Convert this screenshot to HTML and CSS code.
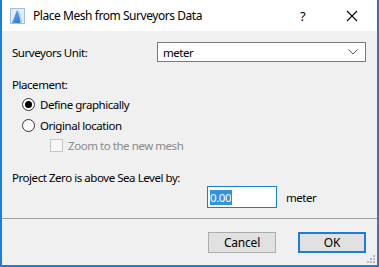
FILE: index.html
```html
<!DOCTYPE html>
<html lang="en">
<head>
  <meta charset="UTF-8" />
  <title>Place Mesh from Surveyors Data</title>
  <link rel="stylesheet" href="styles.css">
</head>
<body>
  <div class="dialog">
    <div class="titlebar">
      <svg class="app-icon" width="15" height="16" viewBox="0 0 15 16">
        <defs>
          <linearGradient id="ig" x1="0" y1="0" x2="1" y2="1">
            <stop offset="0" stop-color="#6fb0f0"/>
            <stop offset="1" stop-color="#1f6fd6"/>
          </linearGradient>
        </defs>
        <rect x="0.5" y="0.5" width="14" height="15" fill="#e4eefa" stroke="#9fbfe6"/>
        <path d="M2 15 L7 2 Q10 2 12 15 Z" fill="url(#ig)"/>
        <path d="M7 2 Q10 2 12 15 L10.5 15 Q9 5 7 2 Z" fill="#ffffff" opacity="0.7"/>
      </svg>
      <span class="title">Place Mesh from Surveyors Data</span>
      <span class="help">?</span>
      <svg class="close" width="12" height="12" viewBox="0 0 12 12">
        <path d="M1 1 L11 11 M11 1 L1 11" stroke="#000" stroke-width="1.1"/>
      </svg>
    </div>

    <div class="content">
      <div class="unit-row">
        <span class="label">Surveyors Unit:</span>
        <div class="select">
          <span>meter</span>
          <svg width="10" height="6" viewBox="0 0 10 6">
            <path d="M0.5 0.5 L5 5 L9.5 0.5" fill="none" stroke="#555" stroke-width="1"/>
          </svg>
        </div>
      </div>

      <div class="group-label">Placement:</div>
      <div class="option">
        <span class="radio checked"></span>
        <span>Define graphically</span>
      </div>
      <div class="option">
        <span class="radio"></span>
        <span>Original location</span>
      </div>
      <div class="option sub disabled">
        <span class="check"></span>
        <span>Zoom to the new mesh</span>
      </div>

      <div class="level-label">Project Zero is above Sea Level by:</div>
      <div class="level-row">
        <div class="field"><span class="sel">0.00</span><span class="caret"></span></div>
        <span>meter</span>
      </div>
    </div>

    <div class="separator"></div>

    <div class="buttons">
      <button class="btn">Cancel</button>
      <button class="btn default">OK</button>
    </div>

    <svg class="grip" width="10" height="10" viewBox="0 0 10 10">
      <rect x="7" y="1" width="2" height="2" fill="#b8b8b8"/>
      <rect x="4" y="4" width="2" height="2" fill="#b8b8b8"/>
      <rect x="7" y="4" width="2" height="2" fill="#b8b8b8"/>
      <rect x="1" y="7" width="2" height="2" fill="#b8b8b8"/>
      <rect x="4" y="7" width="2" height="2" fill="#b8b8b8"/>
      <rect x="7" y="7" width="2" height="2" fill="#b8b8b8"/>
    </svg>
  </div>
</body>
</html>
```

FILE: styles.css
```css
:root {
  --blue: #1a7fd4;
  --face: #f0f0f0;
  --text: #000000;
  --muted: #8a8a8a;
}

* {
  box-sizing: border-box;
}

body {
  margin: 0;
  width: 379px;
  height: 267px;
  overflow: hidden;
  font-family: "Noto Sans", "Open Sans", sans-serif;
  font-size: 11.5px;
  letter-spacing: -0.45px;
  color: var(--text);
}

.dialog {
  position: relative;
  width: 379px;
  height: 267px;
  background: var(--face);
  border: 2px solid var(--blue);
  border-top: 0;
}

.titlebar {
  display: flex;
  align-items: center;
  height: 31px;
  background: #ffffff;
  padding: 0 0 0 8px;
}

.app-icon {
  margin-right: 8px;
}

.title {
  flex: 1;
  font-size: 12px;
  letter-spacing: -0.45px;
}

.help {
  font-size: 13px;
  width: 20px;
  margin-right: 26px;
}

.close {
  margin-right: 19px;
}

.content {
  padding: 11px 11px 0 10px;
}

.unit-row {
  display: flex;
  align-items: center;
  height: 20px;
}

.unit-row .label {
  width: 145px;
}

.select {
  flex: 1;
  display: flex;
  align-items: center;
  justify-content: space-between;
  height: 20px;
  background: #ffffff;
  border: 1px solid #7a7a7a;
  padding: 0 7px 0 5px;
}

.group-label {
  margin-top: 14px;
  height: 18px;
  line-height: 18px;
}

.option {
  display: flex;
  align-items: center;
  height: 21px;
  padding-left: 10px;
}

.option.sub {
  padding-left: 38px;
  height: 18px;
}

.disabled {
  color: var(--muted);
}

.radio {
  width: 13px;
  height: 13px;
  border: 1px solid #333333;
  border-radius: 50%;
  background: #ffffff;
  margin-right: 5px;
  display: flex;
  align-items: center;
  justify-content: center;
}

.radio.checked::after {
  content: "";
  width: 7px;
  height: 7px;
  border-radius: 50%;
  background: #000000;
}

.check {
  width: 13px;
  height: 13px;
  border: 1px solid #c6c6c6;
  background: #f7f7f7;
  margin-right: 5px;
}

.level-label {
  margin-top: 15px;
  height: 17px;
  line-height: 17px;
}

.level-row {
  display: flex;
  align-items: center;
  margin-top: 0;
  padding-left: 195px;
}

.field {
  display: flex;
  align-items: center;
  width: 70px;
  height: 22px;
  background: #ffffff;
  border: 1px solid var(--blue);
  padding-left: 2px;
  margin-right: 9px;
}

.sel {
  background: #3393df;
  color: #ffffff;
  line-height: 15px;
}

.caret {
  width: 1px;
  height: 15px;
  background: #c0641a;
}

.separator {
  margin: 10px 0 0;
  height: 1px;
  background: #a0a0a0;
}

.buttons {
  display: flex;
  justify-content: flex-end;
  gap: 22px;
  padding: 13px 11px 0 0;
}

.btn {
  width: 68px;
  height: 21px;
  font-family: inherit;
  font-size: 12px;
  letter-spacing: -0.2px;
  color: var(--text);
  background: #e1e1e1;
  border: 1px solid #adadad;
  padding: 0;
}

.btn.default {
  border: 2px solid var(--blue);
}

.grip {
  position: absolute;
  right: 1px;
  bottom: 1px;
}
```
